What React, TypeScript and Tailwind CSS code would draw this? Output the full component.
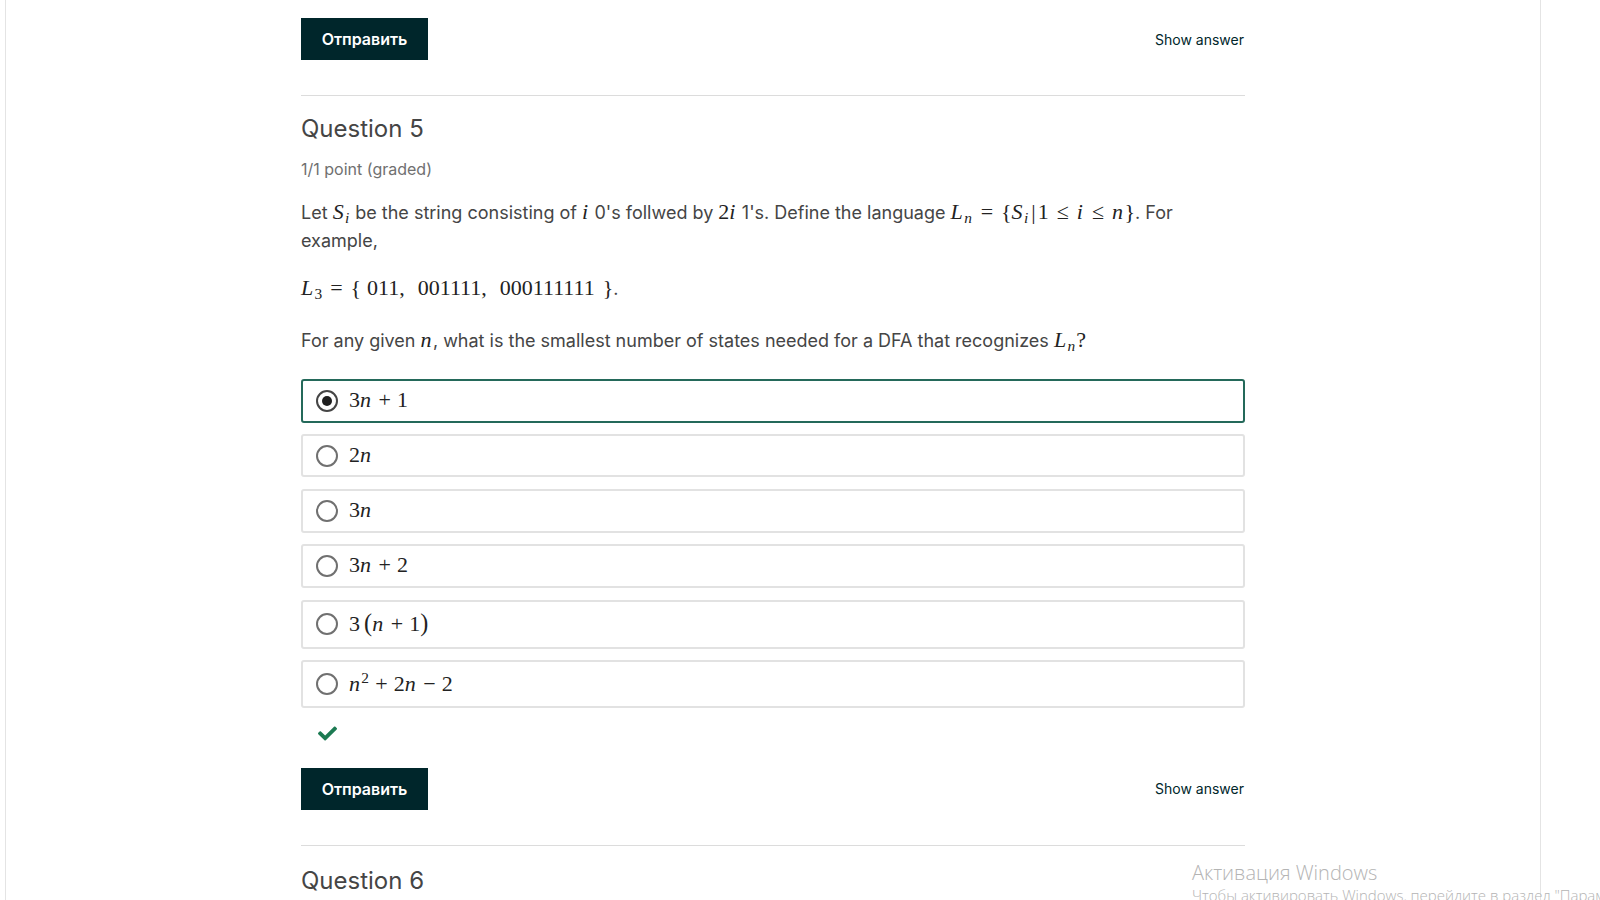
import { FaCheck } from "react-icons/fa";

const sans = "font-['Inter','Noto_Sans',sans-serif]";

function V({ children }: { children: React.ReactNode }) {
  return <span className="italic tracking-[0.06em]">{children}</span>;
}

function Sub({ children }: { children: React.ReactNode }) {
  return <span className="text-[0.7em] align-[-0.25em]">{children}</span>;
}

function Op({ children }: { children: React.ReactNode }) {
  return <span className="mx-[0.28em]">{children}</span>;
}

function Rel({ children }: { children: React.ReactNode }) {
  return <span className="mx-[0.36em]">{children}</span>;
}

function M({ children }: { children: React.ReactNode }) {
  return (
    <span className="font-['Liberation_Serif','Times_New_Roman',serif] text-[22px] leading-none text-[#222]">
      {children}
    </span>
  );
}

const options = [
  { h: "h-[44px]", body: <>3<V>n</V><Op>+</Op>1</>, checked: true },
  { h: "h-[43px]", body: <>2<V>n</V></> },
  { h: "h-[44px]", body: <>3<V>n</V></> },
  { h: "h-[44px]", body: <>3<V>n</V><Op>+</Op>2</> },
  { h: "h-[49px]", body: <>3<span className="ml-[0.17em] text-[1.1em]">(</span><V>n</V><Op>+</Op>1<span className="text-[1.1em]">)</span></> },
  { h: "h-[48px]", body: <><V>n</V><span className="text-[0.7em] align-[0.5em]">2</span><Op>+</Op>2<V>n</V><Op>−</Op>2</> },
];

function SubmitRow() {
  return (
    <div className="flex items-center justify-between">
      <button className={`${sans} w-[127px] h-[42px] bg-[#00262b] text-white text-[16px] font-semibold flex items-center justify-center`}>
        Отправить
      </button>
      <span className={`${sans} text-[14px] text-[#00262b] pr-px`}>Show answer</span>
    </div>
  );
}

export default function App() {
  return (
    <div className="relative h-[900px] overflow-hidden bg-white">
      <div className="ml-[5px] w-[1536px] h-full border-x border-[#e4e4e4] bg-white">
        <div className={`${sans} ml-[295px] w-[944px] pt-[18px] text-[#454545]`}>
          <SubmitRow />
          <div className="mt-[35px] border-t border-[#dcdcdc]" />

          <h2 className="mt-[17px] text-[24px] leading-[32px] font-normal text-[#454545]">Question 5</h2>
          <div className="mt-[12px] text-[16px] leading-[24px] text-[#707070]">1/1 point (graded)</div>

          <p className="mt-[18px] text-[18px] leading-[27.5px] text-[#454545]">
            Let <M><V>S</V><Sub><V>i</V></Sub></M> be the string consisting of <M><V>i</V></M> 0's follwed by{" "}
            <M>2<V>i</V></M> 1's. Define the language{" "}
            <M>
              <V>L</V><Sub><V>n</V></Sub><Rel>=</Rel>{"{"}<V>S</V><Sub><V>i</V></Sub>
              <span className="mx-[0.1em]">|</span>1<Rel>≤</Rel><V>i</V><Rel>≤</Rel><V>n</V>{"}"}
            </M>
            . For
            <br />
            example,
          </p>

          <div className="mt-[21px] text-[18px] leading-[28px]">
            <M>
              <V>L</V><Sub>3</Sub><Rel>=</Rel>{"{"}<span className="ml-[6px]">011,</span>
              <span className="ml-[13px]">001111,</span>
              <span className="ml-[13px]">000111111</span>
              <span className="ml-[8px]">{"}"}</span>
            </M>
            .
          </div>

          <p className="mt-[24px] text-[18px] leading-[28px]">
            For any given <M><V>n</V></M>, what is the smallest number of states needed for a DFA that recognizes{" "}
            <M><V>L</V><Sub><V>n</V></Sub>?</M>
          </p>

          <div className="mt-[24px] flex flex-col gap-[11.4px]">
            {options.map((o, i) => (
              <label
                key={i}
                className={`flex items-center ${o.h} rounded-[3px] border-2 pl-[13px] ${
                  o.checked ? "border-[#24695a]" : "border-[#e2e2e2]"
                }`}
              >
                {o.checked ? (
                  <span className="w-[22px] h-[22px] rounded-full border-2 border-[#454545] flex items-center justify-center">
                    <span className="w-[10px] h-[10px] rounded-full bg-[#1f1f1f]" />
                  </span>
                ) : (
                  <span className="w-[22px] h-[22px] rounded-full border-2 border-[#707070]" />
                )}
                <span className="ml-[11px]">
                  <M>{o.body}</M>
                </span>
              </label>
            ))}
          </div>

          <div className="mt-[18px] pl-[17px] h-[16px] flex items-center">
            <FaCheck className="text-[#1c7a52]" size={19} />
          </div>

          <div className="mt-[26px]">
            <SubmitRow />
          </div>
          <div className="mt-[35px] border-t border-[#dcdcdc]" />

          <h2 className="mt-[19px] text-[24px] leading-[32px] font-normal text-[#454545]">Question 6</h2>
        </div>
      </div>

      <div className="absolute left-[1192px] top-[861px] font-['Open_Sans','Noto_Sans',sans-serif] text-[#b4b4b4] whitespace-nowrap pointer-events-none">
        <div className="text-[20px] leading-[24px] font-light">Активация Windows</div>
        <div className="text-[15px] leading-[20px] font-light">Чтобы активировать Windows, перейдите в раздел "Параметры".</div>
      </div>
    </div>
  );
}
